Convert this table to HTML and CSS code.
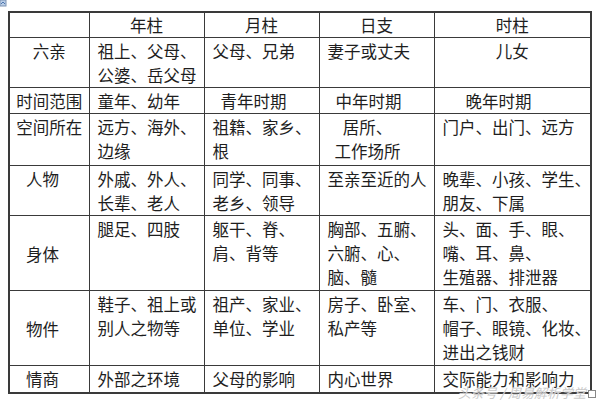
FILE: index.html
```html
<!DOCTYPE html>
<html lang="zh">
<head>
<meta charset="utf-8">
<link rel="stylesheet" href="styles.css">
</head>
<body>
<svg class="corner-icon" width="7" height="7" viewBox="0 0 7 7"><rect x="0" y="0" width="6" height="6" fill="#b9cde6" stroke="#7d93b3" stroke-width="1"/><path d="M1 4 L3 2 L5 4" fill="none" stroke="#4d76b0" stroke-width="1"/></svg>
<table class="grid">
  <colgroup><col class="c1"><col class="c2"><col class="c3"><col class="c4"><col class="c5"></colgroup>
  <tr class="r24"><th></th><th>年柱</th><th>月柱</th><th>日支</th><th>时柱</th></tr>
  <tr class="r50"><td class="lab">六亲</td><td>祖上、父母、<br>公婆、岳父母</td><td>父母、兄弟</td><td>妻子或丈夫</td><td class="ctr">儿女</td></tr>
  <tr class="r26"><td class="lab">时间范围</td><td>童年、幼年</td><td class="ind1">青年时期</td><td class="ind1">中年时期</td><td class="ind2">晚年时期</td></tr>
  <tr class="r52"><td class="lab">空间所在</td><td>远方、海外、<br>边缘</td><td>祖籍、家乡、<br>根</td><td class="shift">居所、<br>工作场所</td><td>门户、出门、远方</td></tr>
  <tr class="r50"><td class="lab left">人物</td><td>外戚、外人、<br>长辈、老人</td><td>同学、同事、<br>老乡、领导</td><td>至亲至近的人</td><td>晚辈、小孩、学生、<br>朋友、下属</td></tr>
  <tr class="r75"><td class="lab left mid">身体</td><td>腿足、四肢</td><td>躯干、脊、<br>肩、背等</td><td>胸部、五腑、<br>六腑、心、<br>脑、髓</td><td>头、面、手、眼、<br>嘴、耳、鼻、<br>生殖器、排泄器</td></tr>
  <tr class="r75"><td class="lab left mid">物件</td><td>鞋子、祖上或<br>别人之物等</td><td>祖产、家业、<br>单位、学业</td><td>房子、卧室、<br>私产等</td><td>车、门、衣服、<br>帽子、眼镜、化妆、<br>进出之钱财</td></tr>
  <tr class="r27"><td class="lab left">情商</td><td>外部之环境</td><td>父母的影响</td><td>内心世界</td><td>交际能力和影响力</td></tr>
</table>
<div class="watermark">头条号 / 周易解析学堂<span class="wm-box"></span></div>
</body>
</html>
```
FILE: styles.css
```css
html, body {
  margin: 0;
  background: #ffffff;
}
body {
  position: relative;
  width: 600px;
  height: 400px;
  overflow: hidden;
  padding: 11px 0 0 8px;
  box-sizing: border-box;
  font-family: "Noto Sans CJK SC", "Noto Sans", sans-serif;
  color: #1e1e1e;
}
.corner-icon {
  position: absolute;
  left: 0;
  top: 0;
}
.grid {
  border-collapse: collapse;
  table-layout: fixed;
  width: 582px;
  font-size: 16.5px;
  line-height: 24px;
  border: 2px solid #3a3a3a;
}
.c1 { width: 80px; }
.c2 { width: 115px; }
.c3 { width: 115px; }
.c4 { width: 115px; }
.c5 { width: 157px; }
.grid th, .grid td {
  border: 1px solid #3a3a3a;
  padding: 1px 0 0 8px;
  vertical-align: top;
  text-align: left;
  white-space: nowrap;
  overflow: hidden;
  font-weight: normal;
}
.grid th {
  text-align: center;
  padding: 0;
  vertical-align: middle;
}
.r24 { height: 24px; }
.r50 { height: 50px; }
.r26 { height: 26px; }
.r52 { height: 52px; }
.r27 { height: 27px; }
.r75 { height: 75px; }
.grid td.lab {
  text-align: center;
  padding-left: 0;
}
.grid td.lab.left {
  text-align: left;
  padding-left: 16px;
}
.grid td.mid {
  vertical-align: middle;
}
.grid td.ctr {
  text-align: center;
  padding-left: 0;
}
.grid td.ind1 { padding-left: 16px; }
.grid td.ind2 { padding-left: 31px; }
.grid td.shift {
  text-align: center;
  padding-left: 0;
  padding-right: 18px;
}
.watermark {
  position: absolute;
  left: 458px;
  top: 386px;
  font-size: 13px;
  line-height: 13px;
  color: #c9c9c9;
  font-style: italic;
  white-space: nowrap;
  text-shadow: 0 0 1px #ffffff;
}
.wm-box {
  display: inline-block;
  width: 6px;
  height: 6px;
  margin-left: 2px;
  border: 1px solid #888;
  background: #fff;
}
```
